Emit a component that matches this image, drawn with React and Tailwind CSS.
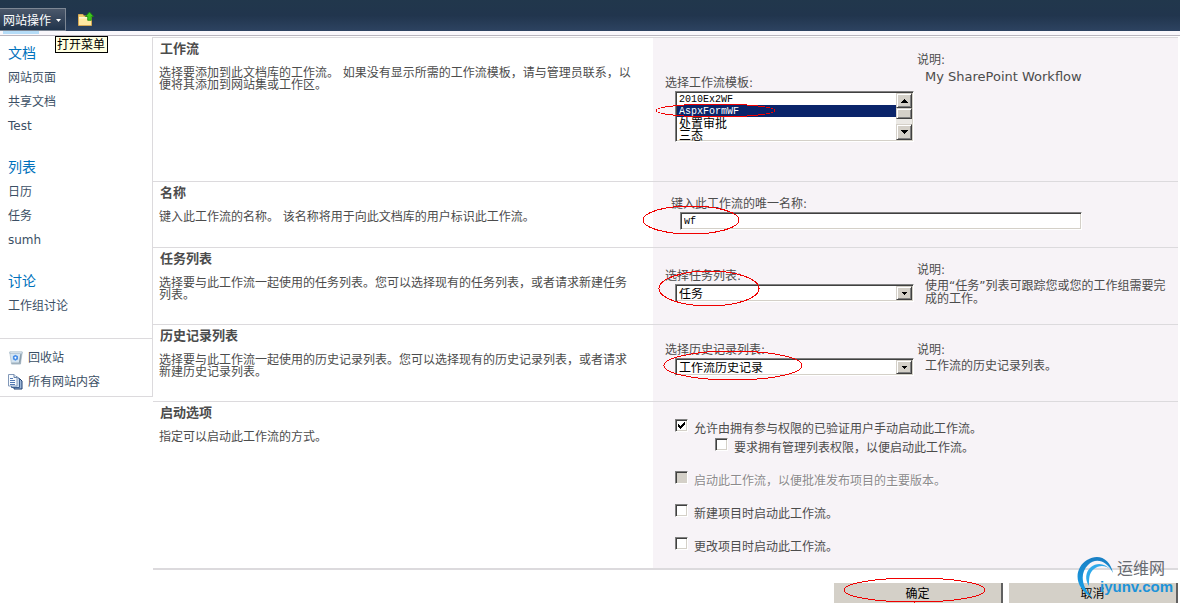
import React, { useState } from "react";

function Ring({ w, h, className }) {
  return (
    <svg
      width={w}
      height={h}
      className={`absolute pointer-events-none z-10 max-w-none ${className}`}
      aria-hidden="true"
      shapeRendering="crispEdges"
    >
      <ellipse cx={w / 2} cy={h / 2} rx={w / 2 - 1} ry={h / 2 - 1} fill="none" stroke="#f00000" />
    </svg>
  );
}

function FolderIcon() {
  return (
    <svg width="16" height="16" viewBox="0 0 16 16" aria-hidden="true">
      <path d="M0.5 14.5V3.5H5l1 1.5h7.5v9.5z" fill="#f0cc6c" stroke="#d6a955" />
      <path d="M1 7h12v7H1z" fill="#ffe9a3" />
      <path d="M1 6h12v1.5H1z" fill="#fff6cf" />
      <path d="M7.5 5.5L11.5 1l4 4.5h-2.2v3.8H9.7V5.5z" fill="#3fc81e" stroke="#198a10" strokeWidth="0.8" />
    </svg>
  );
}

function RecycleIcon() {
  return (
    <svg width="14" height="14" viewBox="0 0 14 14" aria-hidden="true">
      <path d="M0.8 1.5h12.4L11.5 13h-9z" fill="#d5e5f2" stroke="#b5c5d2" strokeWidth="0.8" />
      <path d="M0.8 0.8h12.4v1.5H0.8z" fill="#eef5fa" stroke="#94a9b8" strokeWidth="0.6" />
      <path d="M11.3 3h1.4l-1.3 10H9.6z" fill="#8b9daa" />
      <path d="M2.5 11.5h9v1.7h-9z" fill="#9fb0bd" />
      <path d="M6.4 3.8l2.6 1.5v3L6.4 9.8 3.9 8.3v-3z" fill="#4a8fe8" />
      <path d="M6.4 5.6l1.2 1.2-1.2 1.2-1.2-1.2z" fill="#fff" />
    </svg>
  );
}

function PagesIcon() {
  return (
    <svg width="15" height="16" viewBox="0 0 15 16" aria-hidden="true">
      <path d="M6.5 4.5h5l2.500 2.500v8h-8z" fill="#9db7d8" stroke="#1f3f70" />
      <path d="M3.500 2.500h5.500l2.500 2.500v8.500h-8z" fill="#c9daee" stroke="#3c5f91" />
      <path d="M0.500 0.500h5.500l3 3v8.500h-8.500z" fill="#f7fbff" stroke="#8298b8" />
      <path d="M6 0.500v3h3" fill="#dce8f5" stroke="#6883a8" />
      <path d="M2 4.500h3M2 6.500h5M2 8.500h5M2 10.500h5" stroke="#5379b3" />
    </svg>
  );
}

function Arrow({ up }) {
  return (
    <svg width="7" height="4" viewBox="0 0 7 4" aria-hidden="true" shapeRendering="crispEdges">
      <path d={up ? "M3 0h1v1h1v1h1v1h1v1H0V3h1V2h1V1h1z" : "M0 0h7v1H6v1H5v1H4v1H3V3H2V2H1V1H0z"} fill="#000" />
    </svg>
  );
}

const sunken =
  "border border-t-[#808080] border-l-[#808080] border-r-white border-b-white shadow-[inset_1px_1px_0_#404040,inset_-1px_-1px_0_#d4d0c8] bg-white text-black rounded-none outline-none";
const raised =
  "flex items-center justify-center bg-[#d4d0c8] border border-t-[#d4d0c8] border-l-[#d4d0c8] border-r-[#404040] border-b-[#404040] shadow-[inset_1px_1px_0_#fff,inset_-1px_-1px_0_#808080]";

function NavGroup({ title, items }) {
  return (
    <div className="mb-[18px]">
      <h2 className="text-sm leading-6 text-[#0072bc]">
        <a href="#">{title}</a>
      </h2>
      <ul>
        {items.map((item) => (
          <li key={item} className="h-6 leading-[26px]">
            <a href="#">{item}</a>
          </li>
        ))}
      </ul>
    </div>
  );
}

function Row({ title, text, className, children }) {
  return (
    <section className={`grid grid-cols-[20fr_21fr] border-b border-[#dcdadd] ${className}`}>
      <div className="pt-[3px] pl-1.5 pr-5">
        <h3 className="text-[13px] leading-4 font-bold pl-px">{title}</h3>
        <p className="mt-2.5 leading-3">{text}</p>
      </div>
      <div className="bg-[#f7f3f7] pl-3">{children}</div>
    </section>
  );
}

function Note({ children, className }) {
  return (
    <div className="ml-[3px] flex-1 leading-[13px]">
      <p className="leading-4">说明:</p>
      <p className={`mt-0.5 pl-2 pr-2 ${className}`}>{children}</p>
    </div>
  );
}

function DropDown({ id, label, value, children }) {
  return (
    <div className="w-[249px] shrink-0">
      <label htmlFor={id} className="block leading-4">
        {label}
      </label>
      <div className="relative ml-2.5">
        <select id={id} defaultValue={value} className={`block w-full h-[18px] appearance-none pl-[3px] pt-px leading-3 ${sunken}`}>
          <option>{value}</option>
        </select>
        <span className={`absolute right-0.5 top-0.5 w-4 h-[14px] pointer-events-none ${raised}`}>
          <svg width="5" height="3" viewBox="0 0 5 3" aria-hidden="true" shapeRendering="crispEdges">
            <path d="M0 0h5v1H4v1H3v1H2V2H1V1H0z" />
          </svg>
        </span>
        {children}
      </div>
    </div>
  );
}

function Check({ id, label, checked, disabled, className }) {
  const [on, setOn] = useState(!!checked);

  return (
    <div className={`flex items-start h-[19px] ${className}`}>
      <span className="relative flex">
        <input
          id={id}
          type="checkbox"
          checked={on}
          disabled={disabled}
          onChange={(e) => setOn(e.target.checked)}
          className={`appearance-none w-[13px] h-[13px] disabled:bg-[#d4d0c8] ${sunken}`}
        />
        {on && (
          <svg width="7" height="7" viewBox="0 0 7 7" className="absolute left-[3px] top-[3px] pointer-events-none" shapeRendering="crispEdges" aria-hidden="true">
            <path d="M0 2h1v1h1v1h1V3h1V2h1V1h1V0h1v3H6v1H5v1H4v1H3v1H2V6H1V5H0z" />
          </svg>
        )}
      </span>
      <label htmlFor={id} className={`ml-1.5 mt-0.5 leading-4 ${disabled ? "text-[#8c8a8c] [text-shadow:1px_1px_0_#fff]" : ""}`}>
        {label}
      </label>
    </div>
  );
}

function TemplateList() {
  return (
    <div className="w-[249px] shrink-0 mt-[23px]">
      <label htmlFor="template" className="block leading-4">
        选择工作流模板:
      </label>
      <div className="relative ml-2.5">
        <select
          id="template"
          size={4}
          defaultValue="AspxFormWF"
          className={`block w-full h-[51px] p-px overflow-hidden [scrollbar-width:none] font-[Liberation_Mono,Noto_Sans_CJK_SC,monospace] ${sunken}`}
        >
          <option className="flex items-center h-3 min-h-0 px-0.5 py-0 text-[10px]">2010Ex2WF</option>
          <option className="flex items-center h-3 min-h-0 px-0.5 py-0 text-[10px] bg-linear-to-r from-[#0a246a] to-[#0a246a] [-webkit-text-fill-color:#fff]">
            AspxFormWF
          </option>
          <option className="flex items-center h-3 min-h-0 px-0.5 py-0 text-xs">处置审批</option>
          <option className="flex items-center h-3 min-h-0 px-0.5 py-0 text-xs">三态</option>
        </select>
        <div className="absolute right-0.5 inset-y-0.5 w-4 flex flex-col bg-[#ebe9e5]" aria-hidden="true">
          <span className={`h-[15px] ${raised}`}>
            <Arrow up />
          </span>
          <span className={`h-[11px] ${raised}`}></span>
          <span className={`mt-auto h-4 ${raised}`}>
            <Arrow />
          </span>
        </div>
        <Ring w={121} h={15} className="-left-5 top-3" />
      </div>
    </div>
  );
}

function Watermark() {
  return (
    <div className="absolute right-1 bottom-1.5 w-[100px] h-11 pointer-events-none" aria-hidden="true">
      <svg width="46" height="46" viewBox="0 0 46 46" className="absolute left-0 top-0">
        <defs>
          <linearGradient id="swirl" x1="0" y1="0" x2="0" y2="1">
            <stop offset="0" stopColor="#1a7fc4" />
            <stop offset="1" stopColor="#19a5ec" />
          </linearGradient>
        </defs>
        <path d="M37 20C34 6 23 0 11 7C-2 15 -3 35 17 45C6 35 3 21 12 12C20 4 31 8 37 20z" fill="url(#swirl)" />
        <path d="M35 17C29 10 21 9 15 14C9 19 9 27 13 33C13 25 13 20 18 16C23 12 30 12 35 17z" fill="#2fa9ea" />
      </svg>
      <span className="absolute left-[41px] top-1.5 text-base leading-5 text-[#666a70]">运维网</span>
      <span className="absolute left-6 top-6 text-[15px] leading-5 font-bold text-[#1c93d9] font-[Liberation_Sans,sans-serif]">
        iyunv.com
      </span>
    </div>
  );
}

function App() {
  const [name, setName] = useState("wf");

  return (
    <div className="relative bg-white text-xs text-[#4c4c4c] font-[DejaVu_Sans,Noto_Sans_CJK_SC,sans-serif]">
      <header className="flex items-end h-[31px] bg-linear-to-b from-[#21374c] via-[#21354d] to-[#2d4361]">
        <button className="flex items-center h-[23px] pt-0.5 pl-[3px] pr-1 text-white whitespace-nowrap border border-l-0 border-[#7d8794] bg-linear-to-b from-[#4b586b] to-[#21344b]">
          网站操作
          <svg width="5" height="3" viewBox="0 0 5 3" className="ml-[5px]" aria-hidden="true">
            <path d="M0 0h5L2.5 3z" fill="#fff" />
          </svg>
        </button>
        <button className="ml-3 mb-1" aria-label="向上导航">
          <FolderIcon />
        </button>
      </header>
      <div className="h-[5px] border-b border-[#b9b6bf] bg-[#f9f7fb]">
        <div className="ml-[3px] w-9 h-[3px] bg-[#b5dcf7]"></div>
      </div>
      <div role="tooltip" className="absolute left-[55px] top-9 pl-px pr-0.5 h-[17px] leading-4 text-black bg-[#ffffe1] border border-black z-20">
        打开菜单
      </div>

      <div className="flex items-start">
        <aside className="w-[153px] shrink-0 mt-px pt-1 border-r border-b border-[#dcdadd] text-[#3b4f65]">
          <nav className="pl-2 pb-[3px]">
            <NavGroup title="文档" items={["网站页面", "共享文档", "Test"]} />
            <NavGroup title="列表" items={["日历", "任务", "sumh"]} />
            <NavGroup title="讨论" items={["工作组讨论"]} />
          </nav>
          <div className="pl-2 pt-[7px] pb-[3px] border-t border-[#dcdadd]">
            <a href="#" className="flex items-center h-6 gap-[5px] pl-px">
              <RecycleIcon />
              回收站
            </a>
            <a href="#" className="flex items-center h-[23px] gap-[5px]">
              <PagesIcon />
              所有网站内容
            </a>
          </div>
        </aside>

        <main className="flex-1 min-w-0 mt-px mr-0.5 border-t border-[#dcdadd]">
          <Row
            title="工作流"
            text="选择要添加到此文档库的工作流。 如果没有显示所需的工作流模板，请与管理员联系，以便将其添加到网站集或工作区。"
            className="min-h-36"
          >
            <div className="flex items-start pt-3.5">
              <TemplateList />
              <Note className="text-[13px]">My SharePoint Workflow</Note>
            </div>
          </Row>

          <Row
            title="名称"
            text="键入此工作流的名称。 该名称将用于向此文档库的用户标识此工作流。"
            className="min-h-[66px]"
          >
            <div className="pt-3.5 pl-1.5">
              <label htmlFor="name" className="block leading-4">
                键入此工作流的唯一名称:
              </label>
              <div className="relative ml-[9px] mr-24">
                <input
                  id="name"
                  type="text"
                  value={name}
                  onChange={(e) => setName(e.target.value)}
                  className={`block w-full h-[18px] px-[3px] pt-px text-[10px] font-[Liberation_Mono,monospace] ${sunken}`}
                />
                <Ring w={98} h={30} className="-left-[38px] -top-[7px]" />
              </div>
            </div>
          </Row>

          <Row
            title="任务列表"
            text="选择要与此工作流一起使用的任务列表。您可以选择现有的任务列表，或者请求新建任务列表。"
            className="min-h-[77px]"
          >
            <div className="flex items-start pt-3.5">
              <div className="mt-1.5">
                <DropDown id="tasks" label="选择任务列表:" value="任务">
                  <Ring w={102} h={37} className="-left-[17px] -top-[14px]" />
                </DropDown>
              </div>
              <Note>使用“任务”列表可跟踪您或您的工作组需要完成的工作。</Note>
            </div>
          </Row>

          <Row
            title="历史记录列表"
            text="选择要与此工作流一起使用的历史记录列表。您可以选择现有的历史记录列表，或者请求新建历史记录列表。"
            className="min-h-[77px]"
          >
            <div className="flex items-start pt-[17px]">
              <DropDown id="history" label="选择历史记录列表:" value="工作流历史记录">
                <Ring w={140} h={31} className="-left-3 -top-2" />
              </DropDown>
              <Note>工作流的历史记录列表。</Note>
            </div>
          </Row>

          <Row title="启动选项" text="指定可以启动此工作流的方式。" className="min-h-[168px] border-b-2">
            <div className="pl-2.5 pt-[17px]">
              <Check id="manual" label="允许由拥有参与权限的已验证用户手动启动此工作流。" checked />
              <Check id="manage" label="要求拥有管理列表权限，以便启动此工作流。" className="ml-10" />
              <Check id="publish" label="启动此工作流，以便批准发布项目的主要版本。" disabled className="mt-3.5" />
              <Check id="create" label="新建项目时启动此工作流。" className="mt-3.5" />
              <Check id="change" label="更改项目时启动此工作流。" className="mt-3.5" />
            </div>
          </Row>

          <div className="flex justify-end gap-1.5 mt-[13px]">
            <div className="relative">
              <button className="block w-[169px] h-5 pt-px text-black bg-[#d4d0c8] border-r-2 border-[#606060]">确定</button>
              <Ring w={143} h={26} className="left-[9px] -top-1.5" />
            </div>
            <button className="block w-[169px] h-5 pt-px text-black bg-[#d4d0c8] border-r-2 border-[#606060]">取消</button>
          </div>
        </main>
      </div>
      <Watermark />
    </div>
  );
}

export default App;
